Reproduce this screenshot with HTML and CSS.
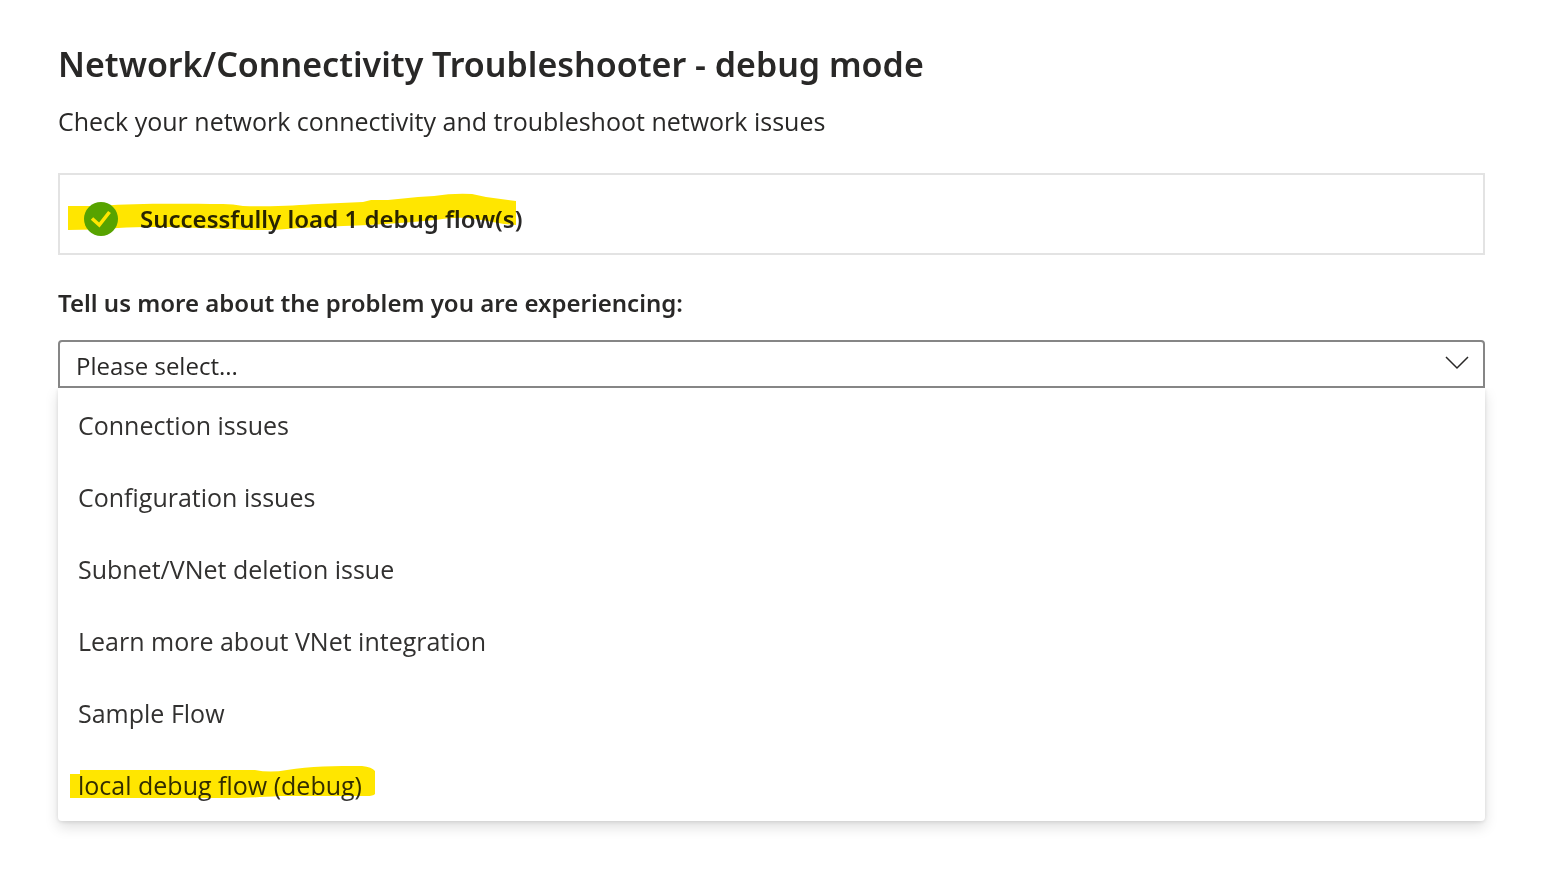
FILE: index.html
```html
<!DOCTYPE html>
<html lang="en">
<head>
<meta charset="utf-8">
<meta name="viewport" content="width=device-width, initial-scale=1">
<title>Network/Connectivity Troubleshooter</title>
<link rel="stylesheet" href="styles.css">
</head>
<body>
<main class="page">
  <h1 class="title">Network/Connectivity Troubleshooter - debug mode</h1>
  <p class="subtitle">Check your network connectivity and troubleshoot network issues</p>
  <section class="status" role="status">
    <svg class="status-icon" viewBox="0 0 34 34" aria-hidden="true"><circle cx="17" cy="17" r="17" fill="#57a300"/><path d="M8 16.5 15.3 23 25.5 10" fill="none" stroke="#ffe600" stroke-width="3.6"/></svg>
    <span class="status-text">Successfully load 1 debug flow(s)</span>
    <svg class="marker marker-status" viewBox="0 0 448 37" aria-hidden="true"><path d="M0 12H35C65 9 115 10 155 10Q165 10 175 12C210 13 230 11 250 10L295 8 303 6 320 6 350 3 366 2Q385-1 404 0L418 3 448 7V31L436 30Q415 26 400 24Q385 23 367 26L345 28C310 31 270 32 232 34C210 36 190 37 165 35C110 33 80 32 50 34Q25 36 0 36Z" fill="#ffe600"/></svg>
  </section>
  <label class="field-label" for="problem">Tell us more about the problem you are experiencing:</label>
  <div class="dropdown">
    <select class="select" id="problem"><option>Please select...</option></select>
    <svg class="chevron" viewBox="0 0 24 14" aria-hidden="true"><path d="M1 1 12 12 23 1" fill="none" stroke="#292827" stroke-width="1.5"/></svg>
    <div class="menu" role="listbox" aria-label="Problem">
      <button class="option" type="button" role="option">Connection issues</button>
      <button class="option" type="button" role="option">Configuration issues</button>
      <button class="option" type="button" role="option">Subnet/VNet deletion issue</button>
      <button class="option" type="button" role="option">Learn more about VNet integration</button>
      <button class="option" type="button" role="option">Sample Flow</button>
      <button class="option" type="button" role="option">local debug flow (debug)
        <svg class="marker marker-option" viewBox="0 0 305 32" aria-hidden="true"><path d="M0 8H10V4H185Q200 7 217 4C240 0 265 0 292 0Q302 1 305 5V28Q303 30 297 30H210C190 31 180 32 160 32H0Z" fill="#ffe600"/></svg>
      </button>
    </div>
  </div>
</main>
</body>
</html>
```
FILE: styles.css
```css
* { box-sizing: border-box; }
body {
  margin: 0;
  background: #fff;
  color: #292827;
  font-family: "Segoe UI", "Open Sans", "Noto Sans", sans-serif;
  font-size: 25px;
  line-height: 36px;
}
.page { padding: 40px 63px 40px 58px; }
.title, .status-text, .field-label { font-family: "Segoe UI", "Noto Sans", "Open Sans", sans-serif; }
.title { margin: 0; font-size: 34px; line-height: 48px; font-weight: 560; }
.subtitle { margin: 15px 0 34px; }
.status {
  position: relative;
  display: flex;
  align-items: center;
  gap: 22px;
  padding: 26px 24px 16px;
  border: 2px solid #e3e3e3;
}
.status-icon { position: relative; z-index: 1; flex: none; width: 34px; height: 34px; }
.marker { position: absolute; mix-blend-mode: multiply; pointer-events: none; overflow: visible; }
.marker-status { left: 8px; top: 19px; width: 448px; height: 37px; }
.field-label { display: block; margin: 30px 0 19px; }
.status-text, .field-label { font-size: 24px; font-weight: 600; }
.dropdown { position: relative; }
.select {
  display: block;
  width: 100%;
  height: 48px;
  padding: 4px 56px 0 16px;
  border: 2px solid #868686;
  border-radius: 4px 4px 0 0;
  background: #fff;
  color: inherit;
  font: inherit;
  font-size: 24px;
  appearance: none;
}
.chevron { position: absolute; right: 16px; top: 16px; width: 24px; height: 14px; pointer-events: none; }
.menu {
  display: flex;
  flex-direction: column;
  padding-top: 1px;
  background: #fff;
  border-radius: 0 0 4px 4px;
  box-shadow: 0 6px 14px rgba(0, 0, 0, 0.13), 0 1px 4px rgba(0, 0, 0, 0.11);
  clip-path: inset(0 -30px -30px -30px);
}
.option {
  position: relative;
  height: 72px;
  padding: 0 20px;
  border: 0;
  background: transparent;
  color: #323130;
  font: inherit;
  text-align: left;
}
.marker-option { left: 12px; top: 17px; width: 305px; height: 32px; }
```
